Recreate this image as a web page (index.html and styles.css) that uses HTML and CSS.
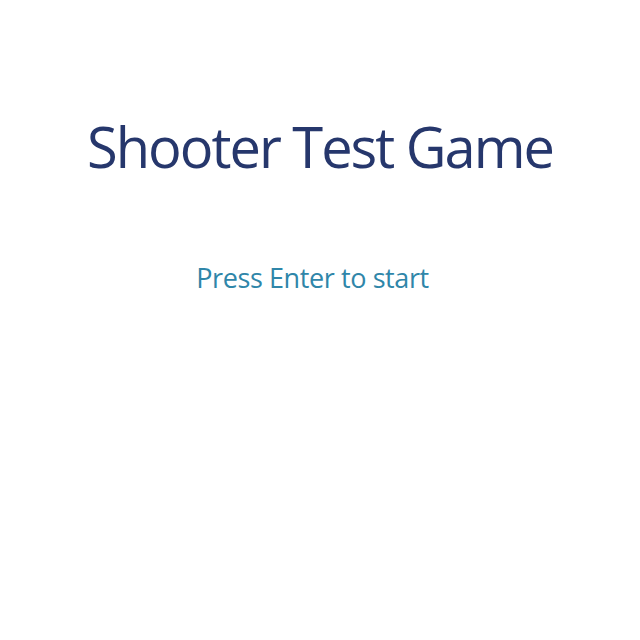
FILE: index.html
```html
<!DOCTYPE html>
<html>
<head>
<meta charset="utf-8">
<link rel="stylesheet" href="styles.css">
</head>
<body>
<main class="screen">
  <h1 class="title">Shooter Test Game</h1>
  <p class="prompt">Press Enter to start</p>
</main>
</body>
</html>
```
FILE: styles.css
```css
html, body {
  margin: 0;
  padding: 0;
  background: #ffffff;
}
.screen {
  width: 640px;
  height: 640px;
  display: flex;
  flex-direction: column;
  align-items: center;
  font-family: "Open Sans", "Noto Sans", sans-serif;
}
.title {
  margin: 108px 0 0;
  font-size: 56px;
  font-weight: 400;
  line-height: 76px;
  color: #26376c;
  letter-spacing: -2px;
}
.prompt {
  margin: 75px 0 0 -15px;
  font-size: 27px;
  line-height: 37px;
  color: #2f86a9;
  letter-spacing: -0.4px;
}
```
